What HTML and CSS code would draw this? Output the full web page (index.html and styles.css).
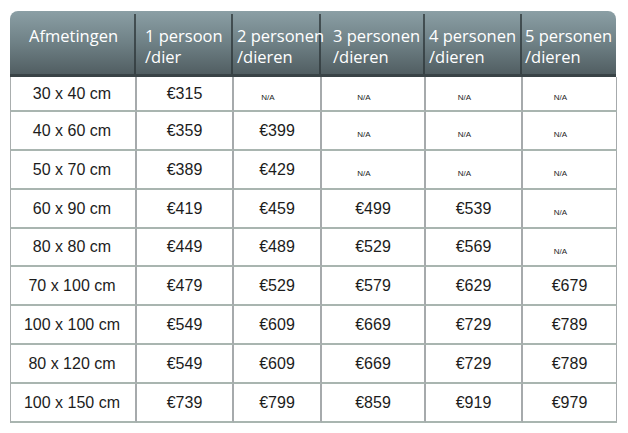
FILE: index.html
```html
<!DOCTYPE html>
<html lang="nl">
<head>
<meta charset="utf-8">
<title>Prijzen</title>
<link rel="stylesheet" href="styles.css">
</head>
<body>
<div class="table">
  <div class="head">
    <div class="th">Afmetingen</div>
    <div class="th">1 persoon<br>/dier</div>
    <div class="th">2 personen<br>/dieren</div>
    <div class="th">3 personen<br>/dieren</div>
    <div class="th">4 personen<br>/dieren</div>
    <div class="th">5 personen<br>/dieren</div>
  </div>
  <div class="body">
    <div class="td">30 x 40 cm</div><div class="td">€315</div><div class="td na">N/A</div><div class="td na">N/A</div><div class="td na">N/A</div><div class="td na">N/A</div>
    <div class="td">40 x 60 cm</div><div class="td">€359</div><div class="td">€399</div><div class="td na">N/A</div><div class="td na">N/A</div><div class="td na">N/A</div>
    <div class="td">50 x 70 cm</div><div class="td">€389</div><div class="td">€429</div><div class="td na">N/A</div><div class="td na">N/A</div><div class="td na">N/A</div>
    <div class="td">60 x 90 cm</div><div class="td">€419</div><div class="td">€459</div><div class="td">€499</div><div class="td">€539</div><div class="td na">N/A</div>
    <div class="td">80 x 80 cm</div><div class="td">€449</div><div class="td">€489</div><div class="td">€529</div><div class="td">€569</div><div class="td na">N/A</div>
    <div class="td">70 x 100 cm</div><div class="td">€479</div><div class="td">€529</div><div class="td">€579</div><div class="td">€629</div><div class="td">€679</div>
    <div class="td">100 x 100 cm</div><div class="td">€549</div><div class="td">€609</div><div class="td">€669</div><div class="td">€729</div><div class="td">€789</div>
    <div class="td">80 x 120 cm</div><div class="td">€549</div><div class="td">€609</div><div class="td">€669</div><div class="td">€729</div><div class="td">€789</div>
    <div class="td">100 x 150 cm</div><div class="td">€739</div><div class="td">€799</div><div class="td">€859</div><div class="td">€919</div><div class="td">€979</div>
  </div>
</div>
</body>
</html>
```

FILE: styles.css
```css
html, body {
  margin: 0;
  padding: 0;
  background: #ffffff;
}
body {
  padding: 11px 0 0 10px;
}
.table {
  width: 606px;
}
.head {
  display: grid;
  grid-template-columns: 126px 97px 88px 104px 97px 94px;
  height: 66px;
  box-sizing: border-box;
  border-radius: 8px 8px 0 0;
  background: linear-gradient(to bottom, #8b9fa5 0%, #6f8186 50%, #515e62 100%);
  border-bottom: 3px solid #394346;
}
.th {
  margin-top: 3px;
  padding-top: 11px;
  color: #ffffff;
  font-family: "Open Sans", "Noto Sans", sans-serif;
  font-size: 16.5px;
  line-height: 21px;
  white-space: nowrap;
  border-right: 2px solid rgba(45, 55, 58, 0.75);
}
.th:nth-child(1) { padding-left: 19px; }
.th:nth-child(2) { padding-left: 9px; }
.th:nth-child(3) { padding-left: 4px; }
.th:nth-child(4) { padding-left: 12px; }
.th:nth-child(5) { padding-left: 4px; }
.th:nth-child(6) { padding-left: 3px; border-right: none; }

.body {
  display: grid;
  grid-template-columns: 126px 97px 88px 104px 97px 94px;
  grid-template-rows: 35px 39px 39px 39px 38px 39px 39px 39px 39px;
  border-left: 1px solid #a9aeae;
}
.td {
  display: flex;
  align-items: center;
  justify-content: center;
  box-sizing: border-box;
  border-right: 2px solid #a6aaac;
  border-bottom: 2px solid #a9b5b0;
  font-family: "Liberation Sans", Arial, sans-serif;
  font-size: 16px;
  color: #1c1c1c;
  white-space: nowrap;
}
.td:nth-child(6n+1) {
  padding-right: 2px;
}
.td:nth-child(6n) {
  border-right: 1px solid #a6aaac;
}
.td.na {
  font-size: 8px;
  padding-top: 8px;
  padding-right: 18px;
}
```
